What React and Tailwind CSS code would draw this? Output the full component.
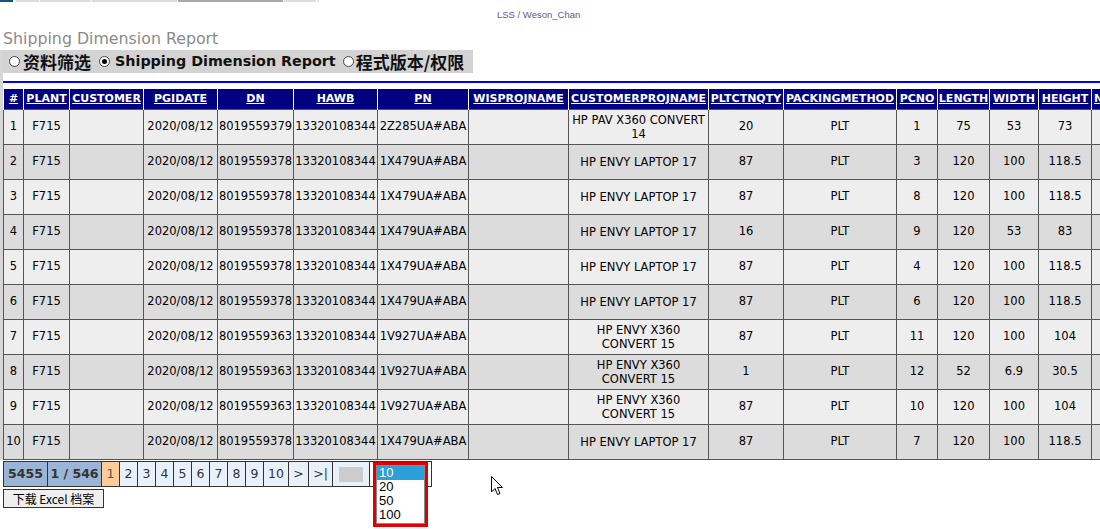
import React from "react";

const COLS = [
  { key: "no", label: "#", w: 20 },
  { key: "plant", label: "PLANT", w: 46 },
  { key: "customer", label: "CUSTOMER", w: 74 },
  { key: "pgidate", label: "PGIDATE", w: 74 },
  { key: "dn", label: "DN", w: 76 },
  { key: "hawb", label: "HAWB", w: 84 },
  { key: "pn", label: "PN", w: 91 },
  { key: "wis", label: "WISPROJNAME", w: 100 },
  { key: "cust", label: "CUSTOMERPROJNAME", w: 140 },
  { key: "qty", label: "PLTCTNQTY", w: 75 },
  { key: "pack", label: "PACKINGMETHOD", w: 113 },
  { key: "pcno", label: "PCNO", w: 41 },
  { key: "len", label: "LENGTH", w: 52 },
  { key: "wid", label: "WIDTH", w: 49 },
  { key: "hei", label: "HEIGHT", w: 53 },
  { key: "net", label: "NETWEIGHT", w: 90 },
];

const TABLE_W = COLS.reduce((s, c) => s + c.w, 0);

const LAPTOP = ["HP ENVY LAPTOP 17"];
const X360 = ["HP ENVY X360", "CONVERT 15"];

// rows as shown on page 1
const ROWS = [
  ["8019559379", "2Z285UA#ABA", ["HP PAV X360 CONVERT", "14"], "20", "1", "75", "53", "73"],
  ["8019559378", "1X479UA#ABA", LAPTOP, "87", "3", "120", "100", "118.5"],
  ["8019559378", "1X479UA#ABA", LAPTOP, "87", "8", "120", "100", "118.5"],
  ["8019559378", "1X479UA#ABA", LAPTOP, "16", "9", "120", "53", "83"],
  ["8019559378", "1X479UA#ABA", LAPTOP, "87", "4", "120", "100", "118.5"],
  ["8019559378", "1X479UA#ABA", LAPTOP, "87", "6", "120", "100", "118.5"],
  ["8019559363", "1V927UA#ABA", X360, "87", "11", "120", "100", "104"],
  ["8019559363", "1V927UA#ABA", X360, "1", "12", "52", "6.9", "30.5"],
  ["8019559363", "1V927UA#ABA", X360, "87", "10", "120", "100", "104"],
  ["8019559378", "1X479UA#ABA", LAPTOP, "87", "7", "120", "100", "118.5"],
];

const Radio = ({ checked }) => (
  <span className="inline-flex w-[11px] h-[11px] rounded-full border border-[#444] bg-white items-center justify-center shrink-0">
    {checked && <span className="w-[5px] h-[5px] rounded-full bg-black" />}
  </span>
);

const td = "border border-[#555] text-center align-middle px-0 whitespace-nowrap";
const pg = "border border-[#333] h-[25px] text-center align-middle p-0";

export default function App() {
  return (
    <div
      className="relative w-[1100px] h-[529px] overflow-hidden bg-white text-black"
      style={{ fontFamily: '"DejaVu Sans", "Noto Sans CJK SC", sans-serif' }}
    >
      {/* top tab strip */}
      <div className="flex h-[2px] gap-[1px]">
        <div className="w-[13px] bg-[#0b5a78]" />
        <div className="w-[1px]" />
        <div className="w-[23px] bg-[#dcdcdc]" />
        <div className="w-[51px] bg-[#dcdcdc]" />
        <div className="w-[85px] bg-[#dcdcdc]" />
        <div className="w-[105px] bg-[#a8a8a8]" />
        <div className="w-[32px] bg-[#dcdcdc]" />
        <div className="w-[2px] bg-[#e8e8e8]" />
      </div>

      <div className="h-[26px] flex items-center pl-[497px]">
        <span className="text-[9.5px] text-[#5c5c8e]" style={{ fontFamily: '"Liberation Sans", sans-serif' }}>
          LSS / Weson_Chan
        </span>
      </div>

      <div className="h-[22px] pl-[3px] text-[15.8px] leading-[22px] text-[#8a8a8a]">Shipping Dimension Report</div>

      <div className="flex">
        <div className="w-[3px] h-[410px] bg-[#d6d6d6] shrink-0" />
        <div className="flex-1 min-w-0">
          <div className="w-[470px] h-[23px] bg-[#d3d3d3] flex items-center pl-[6px] font-bold text-[#111]">
            <Radio />
            <span className="text-[17px] ml-[3px] mr-[8px] leading-none" style={{ fontFamily: '"Noto Sans CJK SC", sans-serif' }}>资料筛选</span>
            <Radio checked />
            <span className="text-[14.3px] ml-[5px] mr-[7px] leading-none">Shipping Dimension Report</span>
            <Radio />
            <span className="text-[17px] ml-[2px] leading-none" style={{ fontFamily: '"Noto Sans CJK SC", sans-serif' }}>程式版本/权限</span>
          </div>

          <div className="h-[8px]" />
          <div className="h-[2px] bg-[#0000ff]" />
          <div className="h-[6px]" />

          <table className="border-collapse table-fixed" style={{ width: TABLE_W }}>
            <colgroup>
              {COLS.map((c) => (
                <col key={c.key} style={{ width: c.w }} />
              ))}
            </colgroup>
            <thead>
              <tr className="h-[20px] bg-[#000080]">
                {COLS.map((c) => (
                  <th
                    key={c.key}
                    className={`border-x border-white text-white text-[11px] font-bold underline p-0 whitespace-nowrap ${c.key === "net" ? "text-left pl-[2px]" : "text-center"}`}
                  >
                    {c.label}
                  </th>
                ))}
              </tr>
            </thead>
            <tbody className="text-[11.5px]">
              {ROWS.map((r, i) => (
                <tr key={i} className={`h-[35px] ${i % 2 === 0 ? "bg-[#eeeeee]" : "bg-[#dcdcdc]"}`}>
                  <td className={td}>{i + 1}</td>
                  <td className={td}>F715</td>
                  <td className={td}></td>
                  <td className={td}>2020/08/12</td>
                  <td className={td}>{r[0]}</td>
                  <td className={td}>13320108344</td>
                  <td className={td}>{r[1]}</td>
                  <td className={td}></td>
                  <td className={`${td} leading-[14px]`}>
                    {r[2].map((l, j) => (
                      <div key={j}>{l}</div>
                    ))}
                  </td>
                  <td className={td}>{r[3]}</td>
                  <td className={td}>PLT</td>
                  <td className={td}>{r[4]}</td>
                  <td className={td}>{r[5]}</td>
                  <td className={td}>{r[6]}</td>
                  <td className={td}>{r[7]}</td>
                  <td className={td}></td>
                </tr>
              ))}
            </tbody>
          </table>
        </div>
      </div>

      {/* pager */}
      <div className="pl-[3px] mt-[1px]">
        <table className="border-collapse text-[12.5px] text-[#333]">
          <tbody>
            <tr>
              <td className={`${pg} w-[44px] bg-[#9bb5d6] font-bold`}>5455</td>
              <td className={`${pg} w-[54px] bg-[#9bb5d6] font-bold`}>1 / 546</td>
              <td className={`${pg} w-[18px] bg-[#ffcc99] text-[#555]`}>1</td>
              {["2", "3", "4", "5", "6", "7", "8", "9"].map((n) => (
                <td key={n} className={`${pg} w-[18px] bg-[#e8f0fa]`}>{n}</td>
              ))}
              <td className={`${pg} w-[25px] bg-[#e8f0fa]`}>10</td>
              <td className={`${pg} w-[20px] bg-[#e8f0fa]`}>&gt;</td>
              <td className={`${pg} w-[24px] bg-[#e8f0fa]`}>&gt;|</td>
              <td className={`${pg} w-[37px] bg-[#e8f0fa]`}>
                <div className="mx-auto w-[24px] h-[15px] bg-[#cccccc]" />
              </td>
              <td className={`${pg} w-[62px] bg-white`}></td>
            </tr>
          </tbody>
        </table>
        <button
          className="mt-[1px] h-[19px] w-[101px] bg-[#efefef] border border-[#333] text-[12px] leading-[17px] text-black"
          style={{ fontFamily: '"Noto Sans CJK SC", sans-serif' }}
        >
          下载 Excel 档案
        </button>
      </div>

      {/* open page-size list, framed in red */}
      <div
        className="absolute left-[373px] top-[462px] w-[55px] border-[3px] border-[#e00000] bg-white text-[13px] leading-[14px]"
        style={{ fontFamily: '"Liberation Sans", sans-serif' }}
      >
        <div className="border border-[#888] pb-[1px]">
          <div className="bg-[#2a9fd8] text-white pl-[2px]">10</div>
          <div className="pl-[2px]">20</div>
          <div className="pl-[2px]">50</div>
          <div className="pl-[2px]">100</div>
        </div>
      </div>

      {/* mouse pointer */}
      <svg className="absolute left-[491px] top-[476px]" width="13" height="20" viewBox="0 0 13 20">
        <path d="M0.5 0.5 L0.5 16 L4 12.5 L6.5 18.5 L9 17.5 L6.5 11.5 L11.5 11.5 Z" fill="white" stroke="black" strokeWidth="1" strokeLinejoin="round" />
      </svg>
    </div>
  );
}
